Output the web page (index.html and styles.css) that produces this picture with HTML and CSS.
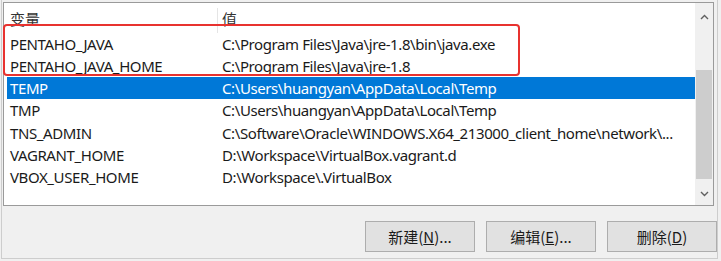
FILE: index.html
```html
<!DOCTYPE html>
<html lang="zh-CN">
<head>
    <meta charset="UTF-8">
    <title>环境变量</title>
    <link rel="stylesheet" href="styles.css">
</head>
<body>
    <div class="frame">
        <div class="listbox">
            <div class="list">
                <div class="header">
                    <div class="col name">变量</div>
                    <div class="col value">值</div>
                </div>
                <div class="row"><div class="col name">PENTAHO_JAVA</div><div class="col value">C:\Program Files\Java\jre-1.8\bin\java.exe</div></div>
                <div class="row"><div class="col name">PENTAHO_JAVA_HOME</div><div class="col value">C:\Program Files\Java\jre-1.8</div></div>
                <div class="row selected"><div class="col name">TEMP</div><div class="col value">C:\Users\huangyan\AppData\Local\Temp</div></div>
                <div class="row"><div class="col name">TMP</div><div class="col value">C:\Users\huangyan\AppData\Local\Temp</div></div>
                <div class="row"><div class="col name">TNS_ADMIN</div><div class="col value">C:\Software\Oracle\WINDOWS.X64_213000_client_home\network\...</div></div>
                <div class="row"><div class="col name">VAGRANT_HOME</div><div class="col value">D:\Workspace\VirtualBox.vagrant.d</div></div>
                <div class="row"><div class="col name">VBOX_USER_HOME</div><div class="col value">D:\Workspace\.VirtualBox</div></div>
            </div>
            <div class="scrollbar">
                <svg class="arrow" width="9" height="6" viewBox="0 0 9 6"><path d="M1 5 L4.5 1.5 L8 5" fill="none" stroke="#606060" stroke-width="1.4"/></svg>
                <div class="track"><div class="thumb"></div></div>
                <svg class="arrow" width="9" height="6" viewBox="0 0 9 6"><path d="M1 1 L4.5 4.5 L8 1" fill="none" stroke="#606060" stroke-width="1.4"/></svg>
            </div>
            <div class="highlight"></div>
        </div>
        <div class="buttons">
            <button>新建(<u>N</u>)...</button>
            <button>编辑(<u>E</u>)...</button>
            <button>删除(<u>D</u>)</button>
        </div>
    </div>
</body>
</html>
```

FILE: styles.css
```css
body {
    margin: 0;
    background-color: #f0f0f0;
    font-family: "Noto Sans", "Noto Sans CJK SC", sans-serif;
    font-size: 15px;
    color: #1a1a1a;
}

.frame {
    width: 715px;
    height: 258px;
    margin-left: 1px;
    border: 1px solid #cdcdcd;
    border-top: none;
    display: flex;
    flex-direction: column;
}

.listbox {
    position: relative;
    margin: 2px 3px 0 1px;
    height: 202px;
    border: 1px solid #9a9a9a;
    background-color: #fff;
    display: flex;
}

.list {
    flex-grow: 1;
    padding: 0 0 0 3px;
    overflow: hidden;
}

.header {
    display: flex;
    height: 30px;
    align-items: flex-start;
    padding-top: 5px;
    box-sizing: border-box;
    color: #333;
}

.header .name {
    border-right: 1px solid #e5e5e5;
    height: 25px;
}

.row {
    display: flex;
    height: 22.17px;
    line-height: 22px;
    letter-spacing: -0.4px;
}

.col {
    white-space: nowrap;
    overflow: hidden;
}

.name {
    width: 211px;
    padding-left: 3px;
    box-sizing: border-box;
}

.value {
    width: 475px;
    padding-left: 4px;
    box-sizing: border-box;
}

.row.selected {
    background-color: #0078d7;
    color: #fff;
}

.scrollbar {
    width: 18px;
    background-color: #f0f0f0;
    display: flex;
    flex-direction: column;
    align-items: center;
}

.arrow {
    margin: 11px 0 6px;
}

.scrollbar .arrow:last-child {
    margin: 6px 0 8px;
}

.track {
    flex-grow: 1;
    width: 100%;
    display: flex;
    flex-direction: column;
    justify-content: flex-end;
}

.thumb {
    height: 109px;
    margin: 0 1px 6px;
    background-color: #cdcdcd;
}

/* annotation box drawn over the first two rows */
.highlight {
    position: absolute;
    left: -1px;
    top: 21px;
    width: 513px;
    height: 48px;
    border: 2px solid #e8322f;
    border-radius: 4px;
}

.buttons {
    display: flex;
    justify-content: flex-end;
    gap: 11px;
    margin-top: 15px;
}

button {
    width: 110px;
    height: 31px;
    background-color: #e1e1e1;
    border: 1px solid #adadad;
    font-family: "Noto Sans CJK SC", sans-serif;
    font-size: 15px;
    color: #1a1a1a;
    padding: 0;
}
```
